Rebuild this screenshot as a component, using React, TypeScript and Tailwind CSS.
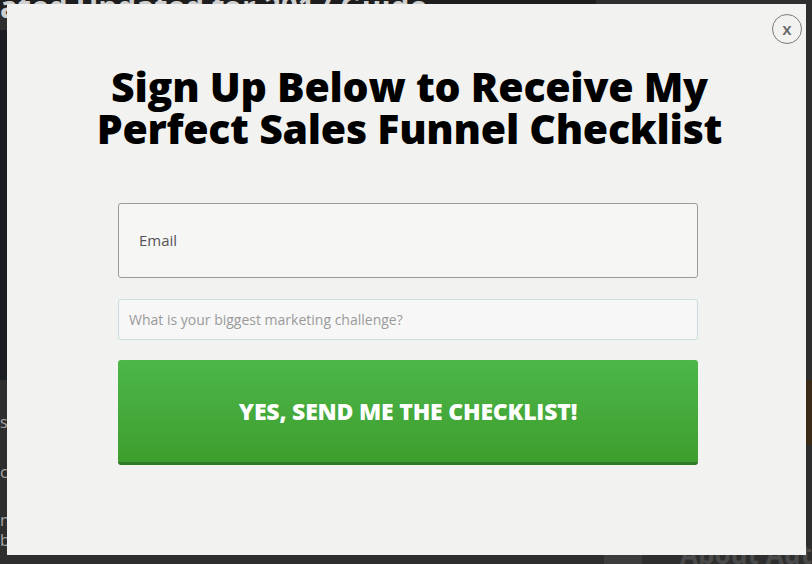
import React from "react";

export default function App() {
  return (
    <div className="relative w-[812px] h-[564px] overflow-hidden bg-[#2e2e2e] font-['Open_Sans',sans-serif]">
      {/* background page */}
      <div className="flex w-full h-full">
        <div className="w-[612px] flex flex-col">
          <div className="h-[30px] bg-[#1e1e1e] -mt-[20px] text-[30px] leading-[30px] font-bold text-[#cfcfcf] whitespace-nowrap">
            <span className="pt-[12px] block">ated Updated for 2017 Guide</span>
          </div>
          <div className="h-[350px] mt-[20px] bg-[#1a1e22]" />
          <div className="flex flex-col gap-[26px] pt-[30px] text-[16px] text-[#a8a8a8]">
            <span>s</span>
            <span>c</span>
            <span className="leading-[20px]">n<br />b</span>
          </div>
        </div>
        <div className="flex-1 flex flex-col pl-[8px] text-[18px] text-[#a0a0a0]">
          <div className="h-[380px] flex flex-col pt-[14px] pl-[186px] leading-[34px]">
            <span>l</span>
            <span>f</span>
            <span>e</span>
          </div>
          <div className="h-[65px] ml-[186px] bg-[#3a2a16]" />
          <div className="flex-1" />
          <div className="h-[20px] flex items-end">
            <div className="w-[38px] h-[14px] bg-[#3c3c3c]" />
            <span className="ml-[38px] text-[26px] leading-[20px] font-bold text-[#4a4a4a] whitespace-nowrap">About Aut</span>
          </div>
        </div>
      </div>

      {/* modal */}
      <div className="absolute left-[7px] top-[4px] w-[799px] h-[551px] bg-[#f2f2f0] flex flex-col">
        <button className="absolute left-[765px] top-[10px] w-[30px] h-[30px] rounded-full border border-[#7a7a7a] flex items-center justify-center text-[#666] text-[17px] font-semibold leading-none pb-[2px]">
          x
        </button>
        <h1 className="pt-[61px] pl-[6px] text-center text-[41px] leading-[42px] font-extrabold text-black tracking-[-0.25px]">
          Sign Up Below to Receive My
          <br />
          Perfect Sales Funnel Checklist
        </h1>
        <div className="ml-[111px] w-[580px] mt-[54px] flex flex-col">
          <div className="h-[75px] rounded-[3px] border border-[#9a9a9a] bg-[#f6f6f5] flex items-center pl-[20px] text-[15px] text-[#555]">
            Email
          </div>
          <div className="mt-[21px] h-[41px] rounded-[3px] border border-[#c6dede] bg-[#f7f7f7] flex items-center pl-[10px] text-[14px] text-[#9a9a9a]">
            What is your biggest marketing challenge?
          </div>
          <button className="mt-[20px] h-[105px] rounded-[3px] border-b-[3px] border-[#2f7a26] bg-gradient-to-b from-[#4cb748] to-[#3e9e2e] flex items-center justify-center text-white text-[23px] font-extrabold tracking-[-0.2px]">
            YES, SEND ME THE CHECKLIST!
          </button>
        </div>
      </div>
    </div>
  );
}
